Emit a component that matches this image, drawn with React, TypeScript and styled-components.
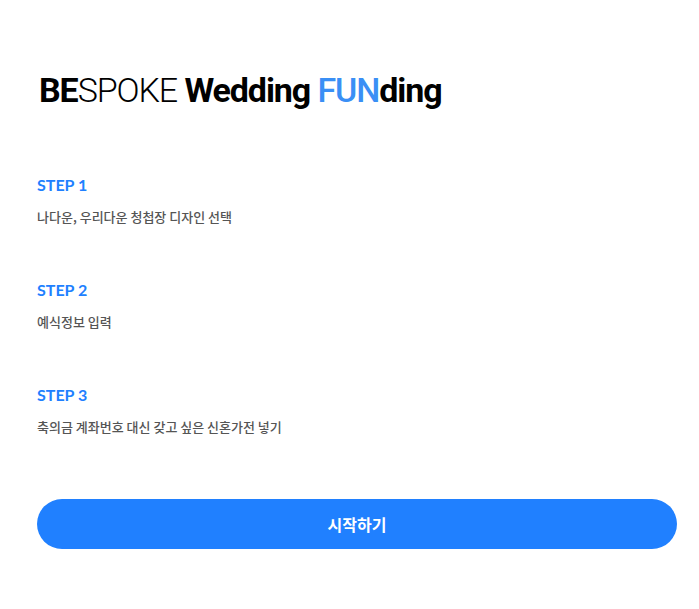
import React from "react";
import styled, { createGlobalStyle } from "styled-components";

const Global = createGlobalStyle`
  html, body { margin: 0; padding: 0; background: #fff; }
  body { font-family: "Noto Sans", "Noto Sans CJK KR", sans-serif; }
`;

const Page = styled.div`
  width: 640px;
  padding: 62px 0 0 37px;
`;

const Title = styled.h1`
  margin: 0 0 0 2px;
  font-family: Roboto, "Noto Sans", sans-serif;
  font-size: 34px;
  line-height: 56px;
  font-weight: 700;
  color: #000;
  letter-spacing: -1.1px;
`;

const Light = styled.span`
  font-weight: 300;
`;

const Blue = styled.span`
  color: #3a8ff5;
  font-weight: 500;
`;

const Steps = styled.div`
  margin-top: 57px;
  display: flex;
  flex-direction: column;
  gap: 53px;
`;

const Step = styled.div`
  display: flex;
  flex-direction: column;
  gap: 12px;
`;

const StepLabel = styled.div`
  font-family: Lato, "Noto Sans", sans-serif;
  font-weight: 700;
  font-size: 16px;
  line-height: 20px;
  color: #2080ff;
`;

const StepText = styled.div`
  font-family: "Noto Sans CJK KR", sans-serif;
  font-size: 13px;
  font-weight: 500;
  line-height: 20px;
  color: #555;
`;

const Button = styled.button`
  margin-top: 62px;
  width: 640px;
  height: 50px;
  border: none;
  border-radius: 25px;
  background: #2080ff;
  color: #fff;
  font-family: "Noto Sans CJK KR", sans-serif;
  font-weight: 700;
  font-size: 16px;
  cursor: pointer;
`;

const steps = [
  { label: "STEP 1", text: "나다운, 우리다운 청첩장 디자인 선택" },
  { label: "STEP 2", text: "예식정보 입력" },
  { label: "STEP 3", text: "축의금 계좌번호 대신 갖고 싶은 신혼가전 넣기" },
];

export default function App() {
  return (
    <>
      <Global />
      <Page>
        <Title>
          BE<Light>SPOKE</Light> Wedding <Blue>FUN</Blue>ding
        </Title>
        <Steps>
          {steps.map((s) => (
            <Step key={s.label}>
              <StepLabel>{s.label}</StepLabel>
              <StepText>{s.text}</StepText>
            </Step>
          ))}
        </Steps>
        <Button>시작하기</Button>
      </Page>
    </>
  );
}
